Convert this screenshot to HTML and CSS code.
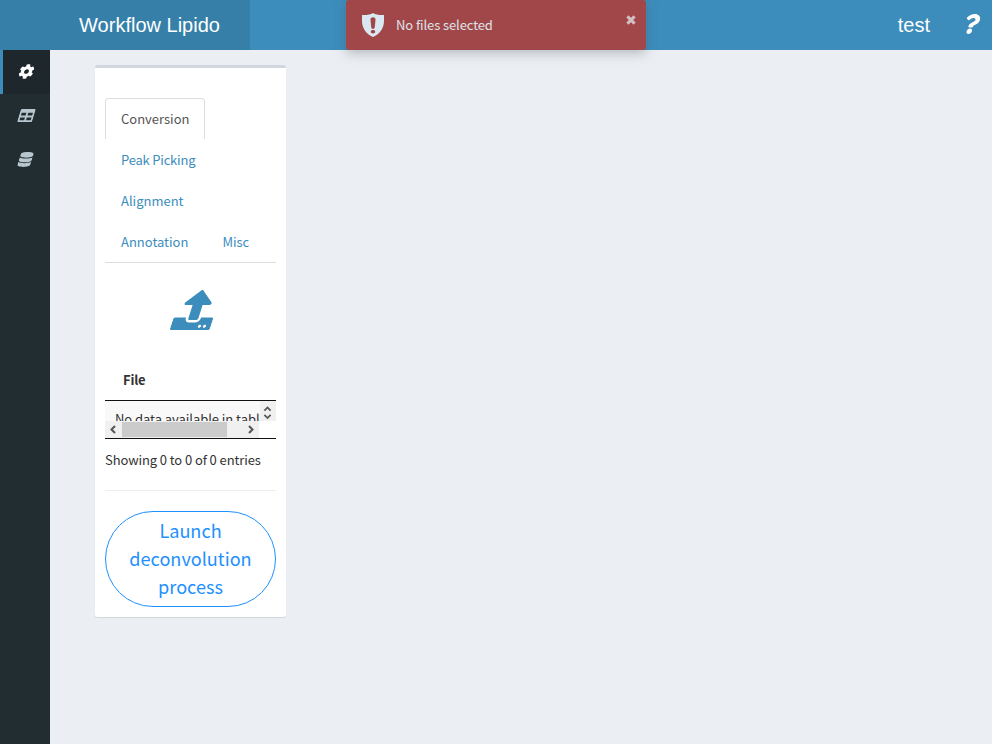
FILE: index.html
```
<!DOCTYPE html>
<html lang="en">
<head>
<meta charset="utf-8">
<title>Workflow Lipido</title>
<link rel="stylesheet" href="styles.css">
</head>
<body>
<header class="header">
  <div class="brand">Workflow Lipido</div>
  <nav class="navbar">
    <span class="user">test</span>
    <svg class="help" viewBox="0 0 384 512"><path d="M202.021 0C122.202 0 70.503 32.703 29.914 91.026c-7.363 10.58-5.093 25.086 5.178 32.874l43.138 32.709c10.373 7.865 25.132 6.026 33.253-4.148 25.049-31.381 43.63-49.449 82.757-49.449 30.764 0 68.816 19.799 68.816 49.631 0 22.552-18.617 34.134-48.993 51.164-35.423 19.86-82.299 44.576-82.299 106.405V320c0 13.255 10.745 24 24 24h72.471c13.255 0 24-10.745 24-24v-5.773c0-42.86 125.268-44.645 125.268-160.627C377.504 66.256 286.902 0 202.021 0zM192 373.459c-38.196 0-69.271 31.075-69.271 69.271 0 38.195 31.075 69.27 69.271 69.27s69.271-31.075 69.271-69.271-31.075-69.27-69.271-69.27z"/></svg>
  </nav>
</header>
<div class="body">
  <aside class="sidebar">
    <a class="side-item active"><svg class="side-icon" viewBox="0 0 512 512"><path d="M487.4 315.7l-42.6-24.6c4.3-23.2 4.3-47 0-70.2l42.6-24.6c4.9-2.8 7.1-8.6 5.5-14-11.1-35.6-30-67.8-54.7-94.6-3.8-4.1-10-5.1-14.8-2.3L380.8 110c-17.9-15.4-38.5-27.3-60.8-35.1V25.8c0-5.6-3.9-10.5-9.4-11.7-36.7-8.2-74.3-7.8-109.2 0-5.5 1.2-9.4 6.1-9.4 11.7V75c-22.2 7.9-42.8 19.8-60.8 35.1L88.700 85.500c-4.9-2.8-11-1.9-14.8 2.3-24.7 26.7-43.6 58.9-54.7 94.6-1.7 5.4.6 11.2 5.5 14L67.300 221c-4.3 23.2-4.3 47 0 70.2l-42.6 24.6c-4.9 2.8-7.1 8.6-5.5 14 11.1 35.6 30 67.8 54.7 94.6 3.8 4.1 10 5.1 14.8 2.3l42.6-24.6c17.9 15.4 38.5 27.3 60.8 35.1v49.2c0 5.6 3.9 10.5 9.4 11.7 36.7 8.2 74.3 7.8 109.2 0 5.5-1.2 9.4-6.1 9.4-11.7v-49.2c22.2-7.9 42.8-19.8 60.8-35.1l42.6 24.6c4.9 2.8 11 1.9 14.8-2.3 24.7-26.7 43.6-58.9 54.7-94.6 1.5-5.5-.7-11.3-5.6-14.1zM256 336c-44.1 0-80-35.9-80-80s35.9-80 80-80 80 35.9 80 80-35.9 80-80 80z"/></svg></a>
    <a class="side-item"><svg class="side-icon" viewBox="0 0 512 512"><path d="M464 32H48C21.49 32 0 53.49 0 80v352c0 26.51 21.49 48 48 48h416c26.51 0 48-21.49 48-48V80c0-26.51-21.49-48-48-48zM224 416H64v-96h160v96zm0-160H64v-96h160v96zm224 160H288v-96h160v96zm0-160H288v-96h160v96z"/></svg></a>
    <a class="side-item"><svg class="side-icon narrow" viewBox="0 0 448 512"><path d="M448 73.143v45.714C448 159.143 347.667 192 224 192S0 159.143 0 118.857V73.143C0 32.857 100.333 0 224 0s224 32.857 224 73.143zM448 176v102.857C448 319.143 347.667 352 224 352S0 319.143 0 278.857V176c48.125 33.143 136.208 48.572 224 48.572S399.874 209.143 448 176zm0 160v102.857C448 479.143 347.667 512 224 512S0 479.143 0 438.857V336c48.125 33.143 136.208 48.572 224 48.572S399.874 369.143 448 336z"/></svg></a>
  </aside>
  <main class="content">
    <section class="box">
      <ul class="tabs">
        <li class="tab current">Conversion</li>
        <li class="tab tight">Peak Picking</li>
        <li class="tab">Alignment</li>
        <li class="tab">Annotation</li>
        <li class="tab">Misc</li>
      </ul>
      <div class="upload"><svg class="upload-icon" viewBox="0 0 512 512"><path d="M296 384h-80c-13.3 0-24-10.7-24-24V192h-87.7c-17.8 0-26.7-21.5-14.1-34.1L242.3 5.7c7.5-7.5 19.8-7.5 27.3 0l152.2 152.2c12.6 12.6 3.7 34.1-14.1 34.1H320v168c0 13.3-10.7 24-24 24zm216-8v112c0 13.3-10.7 24-24 24H24c-13.3 0-24-10.7-24-24V376c0-13.3 10.7-24 24-24h136v8c0 30.9 25.1 56 56 56h80c30.9 0 56-25.1 56-56v-8h136c13.3 0 24 10.7 24 24zm-124 88c0-11-9-20-20-20s-20 9-20 20 9 20 20 20 20-9 20-20zm64 0c0-11-9-20-20-20s-20 9-20 20 9 20 20 20 20-9 20-20z"/></svg></div>
      <div class="thead">File</div>
      <div class="tbody">
        <div class="cell">No data available in table</div>
        <div class="vbar">
          <svg viewBox="0 0 17 20"><path d="M5 9.500L8.500 6l3.500 3.500M5 14.500L8.500 18l3.500-3.500"/></svg>
        </div>
        <div class="hbar">
          <svg viewBox="0 0 17 17"><path d="M10 5L6.500 8.500l3.500 3.500"/></svg>
          <div class="thumb"></div>
          <svg viewBox="0 0 17 17"><path d="M7 5l3.500 3.500L7 12"/></svg>
        </div>
      </div>
      <div class="info">Showing 0 to 0 of 0 entries</div>
      <hr class="rule">
      <button class="launch">Launch<br>deconvolution<br>process</button>
    </section>
  </main>
</div>
<div class="toast">
  <svg class="shield" viewBox="0 0 22 24"><path fill-rule="evenodd" d="M11 0C13.500 1.500 17 2.200 22 2v6c0 7-4 13-11 16C4 21 0 15 0 8V2c5 .2 8.500-.5 11-2zM11 4.200c-1.700 0-2.600 1-2.500 2.500l.7 7.300c.1 1.300.8 2 1.800 2s1.700-.7 1.800-2l.7-7.300c.1-1.500-.8-2.500-2.500-2.500zm0 12.900c-1.300 0-2.200.7-2.200 1.700s.9 1.700 2.200 1.700 2.200-.7 2.200-1.700-.9-1.700-2.200-1.700z"/></svg>
  <span class="toast-text">No files selected</span>
  <svg class="close" viewBox="0 0 10 10"><path d="M1.400 1.400l7.200 7.200M8.600 1.400l-7.200 7.200"/></svg>
</div>
</body>
</html>
```
FILE: styles.css
```
* { box-sizing: border-box; }
body {
  margin: 0;
  height: 744px;
  overflow: hidden;
  display: flex;
  flex-direction: column;
  background: #ebeff4;
  color: #333;
  font: 13px/20px "Noto Sans CJK JP", "Noto Sans", sans-serif;
}
svg { display: block; fill: currentColor; }
.header {
  display: flex;
  flex: 0 0 50px;
  background: #3c8dbc;
  color: #fff;
  font: 20px/50px "Liberation Sans", Arial, sans-serif;
}
.brand { width: 250px; padding-left: 49px; text-align: center; background: #367fa9; }
.navbar { flex: 1; display: flex; justify-content: flex-end; align-items: center; padding-right: 13px; }
.user { margin-right: 34px; }
.help { width: 15px; height: 20px; margin-bottom: 3px; transform: skewX(-17deg); }
.body { flex: 1; display: flex; }
.sidebar { width: 50px; background: #222d32; }
.side-item {
  display: flex;
  height: 44px;
  align-items: center;
  padding: 0 0 1px 16px;
  border-left: 3px solid transparent;
  color: #b8c7ce;
}
.side-item.active { background: #1e282c; border-color: #3c8dbc; color: #fff; }
.side-icon { width: 15px; height: 15px; transform: skewX(-17deg); }
.side-icon.narrow { width: 13px; }
.content { flex: 1; padding: 15px 45px; }
.box {
  width: 191px;
  height: 552px;
  padding: 30px 10px 10px;
  background: #fff;
  border-top: 3px solid #d2d6de;
  border-radius: 3px;
  box-shadow: 0 1px 1px rgba(0, 0, 0, .1);
}
.tabs {
  display: flex;
  flex-wrap: wrap;
  margin: 0;
  padding: 0;
  list-style: none;
  border-bottom: 1px solid #ddd;
}
.tab {
  height: 41px;
  margin-right: 2px;
  padding: 10px 15px;
  border: 1px solid transparent;
  border-bottom: 0;
  border-radius: 4px 4px 0 0;
  color: #3c8dbc;
  white-space: nowrap;
}
.tab.current { border-color: #ddd; color: #555; }
.tab.tight { letter-spacing: -.2px; }
.upload { height: 95px; padding: 27px 0 0 66px; color: #3c8dbc; }
.upload-icon { width: 40px; height: 40px; margin-left: 4.5px; transform: skewX(-18deg); }
.thead { height: 43px; padding: 12px 18px; font-weight: 700; letter-spacing: -.2px; border-bottom: 1px solid #111; }
.tbody {
  display: grid;
  grid-template: 20px 17px / 155px 16px;
  height: 38px;
  border-bottom: 1px solid #111;
}
.cell { overflow: hidden; padding: 8px 0 0 10px; background: #f9f9f9; letter-spacing: -.05px; white-space: nowrap; }
.vbar, .hbar { background: #f0f0f0; }
.vbar svg { width: 15px; height: 20px; }
.hbar { display: flex; width: 154px; }
.hbar svg { width: 17px; height: 17px; }
.vbar path, .hbar path { fill: none; stroke: #555; stroke-width: 2; }
.thumb { width: 105px; height: 15px; margin: 1px 15px 0 0; background: #cbcbcb; }
.info { margin-top: 11px; letter-spacing: -.1px; white-space: nowrap; }
.rule { margin: 20px 0; border: 0; border-top: 1px solid #eee; }
.launch {
  display: block;
  width: 171px;
  height: 96px;
  padding: 0 0 2px;
  border: 1px solid #1e90ff;
  border-radius: 48px;
  background: #fff;
  color: #1e90ff;
  font: 18.1px/28px "Noto Sans CJK JP", "Noto Sans", sans-serif;
}
.toast {
  position: absolute;
  top: 0;
  left: 346px;
  display: flex;
  width: 300px;
  height: 50px;
  padding: 13px 10px 0 16px;
  border-radius: 3px;
  background: #a1474a;
  color: #dce3e8;
  box-shadow: 0 3px 12px rgba(80, 80, 80, .35);
}
.shield { width: 22px; height: 24px; color: #d9e8f1; }
.toast-text { margin: 2px auto 0 12px; letter-spacing: -.1px; }
.close { width: 10px; height: 10px; margin-top: 2px; }
.close path { stroke: #d3bfc5; stroke-width: 3; }
```
